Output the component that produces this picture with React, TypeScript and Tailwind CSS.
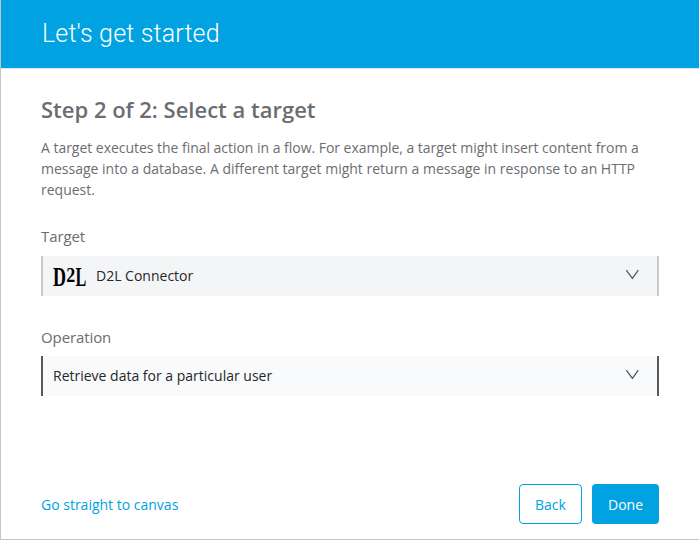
import React from "react";

function Chevron() {
  return (
    <svg width="14" height="11" viewBox="0 0 14 11" fill="none" stroke="#5b5c5f" strokeWidth="1.35" className="mb-[3px] shrink-0">
      <path d="M1.3 1.2 L7.4 9.3 L13.3 1.2" />
    </svg>
  );
}

function D2LLogo() {
  return (
    <svg width="33" height="36" viewBox="0 0 33 36" className="mr-[10px] shrink-0 overflow-visible" fontFamily="Liberation Serif, serif" fontWeight="bold" fill="#000">
      <text x="0" y="27.5" textLength="13" lengthAdjust="spacingAndGlyphs" fontSize="28">D</text>
      <text x="13.2" y="24" textLength="9" lengthAdjust="spacingAndGlyphs" fontSize="22">2</text>
      <text x="22.4" y="27.5" textLength="10.8" lengthAdjust="spacingAndGlyphs" fontSize="28">L</text>
    </svg>
  );
}

export default function App() {
  return (
    <div className="flex h-[540px] w-[699px] flex-col border-b border-l border-[#c4c4c4] bg-white font-['Open_Sans',sans-serif] text-sm text-[#6c6d70]">
      <header className="flex h-[69px] shrink-0 items-center border-b border-[#e2e3e4] bg-[#00a2e1] pl-[41px] text-white">
        <h1 className="font-['Roboto',sans-serif] text-[25px] leading-8 font-light tracking-[0.15px]">Let's get started</h1>
      </header>
      <main className="flex flex-1 flex-col px-10">
        <h2 className="mt-6 text-[22px] leading-8 font-semibold">Step 2 of 2: Select a target</h2>
        <p className="mt-3 leading-[21px]">
          <span className="tracking-[-0.03px]">A target executes the final action in a flow. For example, a target might insert content from a</span><br />
          message into a database. A different target might return a message in response to an HTTP<br />
          request.
        </p>
        <label className="mt-[26px] text-[15px] leading-5 tracking-[-0.1px]">Target</label>
        <div className="mt-[10px] flex h-10 items-center border-x-2 border-[#c8c9cc] bg-[#f4f5f7] pr-[18px] pl-[10px] text-[#262728]">
          <D2LLogo />
          <span className="flex-1">D2L Connector</span>
          <Chevron />
        </div>
        <label className="mt-[31px] text-[15px] leading-5 tracking-[-0.1px]">Operation</label>
        <div className="mt-[9px] flex h-10 items-center border-x-2 border-[#58595b] bg-[#f9fafc] pr-[18px] pl-[10px] text-[#262728]">
          <span className="flex-1">Retrieve data for a particular user</span>
          <Chevron />
        </div>
        <footer className="mt-[88px] flex h-10 items-center gap-[10px] text-[#00a2df]">
          <a className="flex-1 pt-0.5">Go straight to canvas</a>
          <button className="h-10 w-[63px] rounded border border-[#00a2e1] pt-0.5">Back</button>
          <button className="h-10 w-[67px] rounded bg-[#00a2e1] pt-0.5 text-white">Done</button>
        </footer>
      </main>
    </div>
  );
}
